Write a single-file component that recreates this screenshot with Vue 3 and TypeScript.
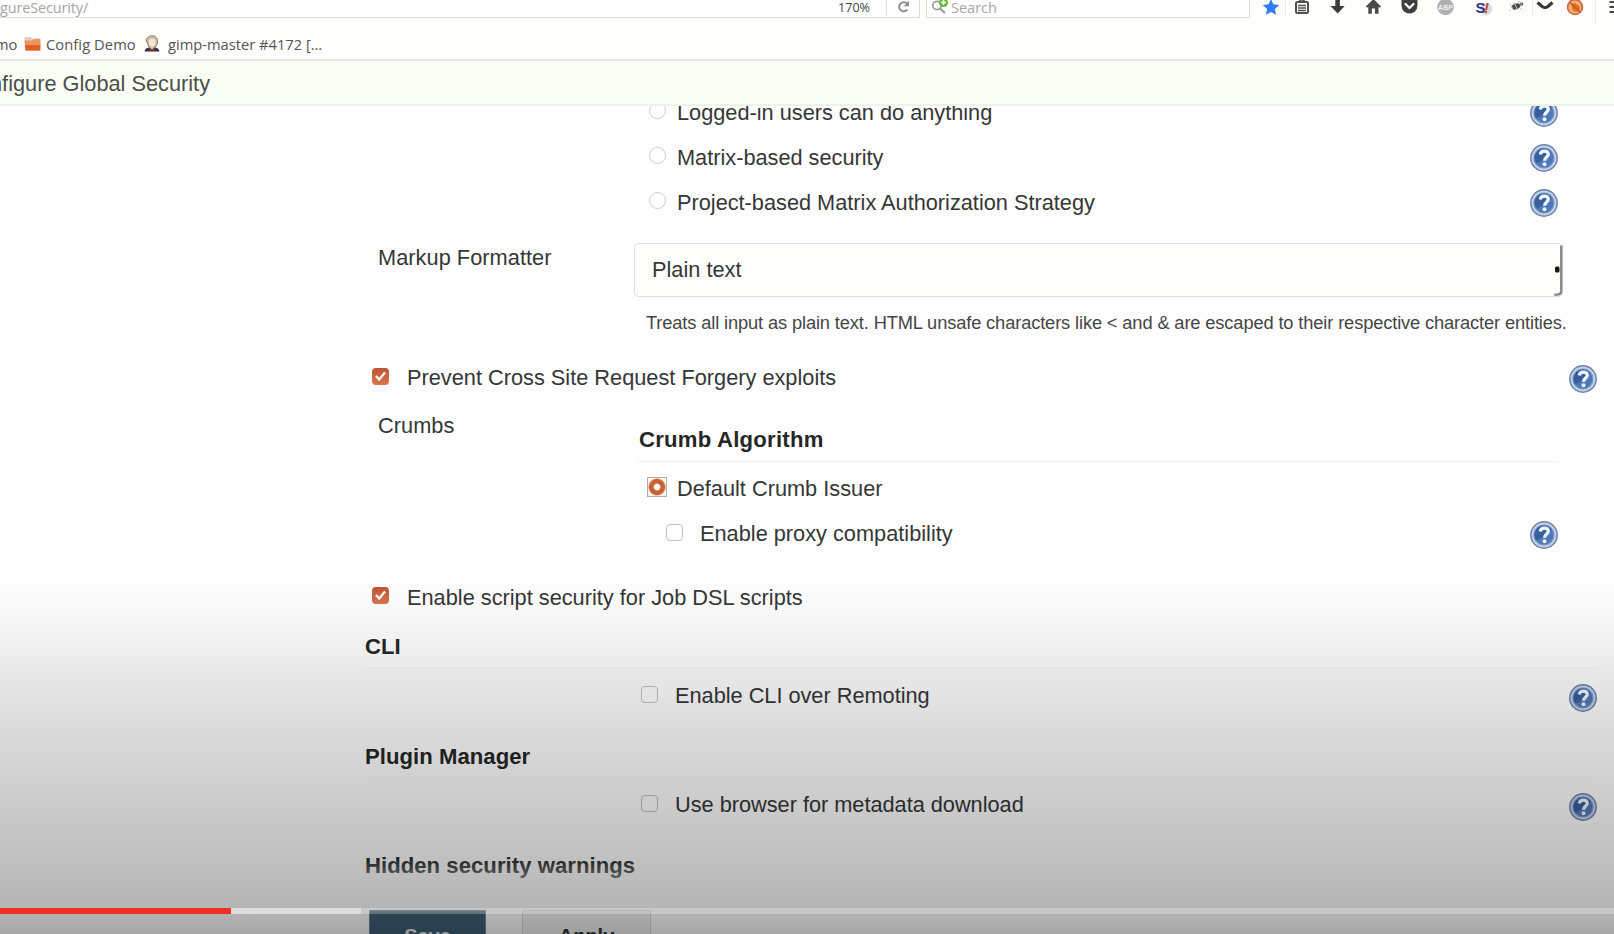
<script setup lang="ts">
import { defineComponent, h } from 'vue'

const strategies: string[] = [
  'Logged-in users can do anything',
  'Matrix-based security',
  'Project-based Matrix Authorization Strategy',
]

interface Section { title: string; option: string; kind: string }
const sections: Section[] = [
  { title: 'CLI', option: 'Enable CLI over Remoting', kind: 'cli' },
  { title: 'Plugin Manager', option: 'Use browser for metadata download', kind: 'plugins' },
]

const HelpIcon = defineComponent({
  render: () =>
    h('svg', { viewBox: '0 0 28 28', width: 28, height: 28 }, [
      h('circle', { cx: 14, cy: 14, r: 13.2, fill: '#c0d3ee', stroke: '#7183a8', 'stroke-width': 1.5 }),
      h('circle', { cx: 14, cy: 14, r: 10, fill: '#5078b6', stroke: '#7b98c8', 'stroke-width': 1.2 }),
      h('path', { d: 'M14 4.5a9.500 9.500 0 0 0-8 14.700Q14 17 21.500 8.300A9.500 9.500 0 0 0 14 4.500z', fill: '#2b508f', opacity: 0.65 }),
      h('path', { d: 'M10.300 10.500C10.600 7.900 12 7.100 14.300 7.100C16.900 7.100 18.300 8.400 18.300 10.300C18.300 13 14.600 13.300 14.600 16.800', fill: 'none', stroke: '#eef5ff', 'stroke-width': 3.3 }),
      h('circle', { cx: 14.500, cy: 20.300, r: 2, fill: '#eef5ff' }),
    ]),
})
</script>

<template>
  <div class="screen">
    <header class="toolbar">
      <div class="url">
        <span class="address">gureSecurity/</span>
        <span class="zoom">170%</span>
        <span class="reload">
          <svg width="14" height="14" viewBox="0 0 14 14"><path d="M10.300 9.700A4.600 4.600 0 1 1 10 3.500" fill="none" stroke="#898d94" stroke-width="2" /><path d="M12 .800v5.400H6.800z" fill="#898d94" /></svg>
        </span>
      </div>
      <div class="search">
        <svg width="18" height="16" viewBox="0 0 18 16"><circle cx="6" cy="5.500" r="4.200" fill="none" stroke="#9a9da1" stroke-width="1.800" /><path d="M9 8.500l5 4.500" stroke="#9a9da1" stroke-width="2.300" /><circle cx="12.500" cy="2.500" r="4.500" fill="#63b82c" /><path d="M12.500 0v5M10 2.500h5" stroke="#fff" stroke-width="1.600" /></svg>
        <span>Search</span>
      </div>
      <svg class="icons" width="364" height="26" viewBox="0 0 364 26">
        <path d="M21-1l2.400 5.300 5.800.700-4.300 4 1.200 5.800-5.100-2.900-5.100 2.900 1.200-5.800-4.300-4 5.800-.700z" fill="#2f7df0" />
        <path d="M35.500 0v16M282.500 0v16M345.500 0v24" stroke="#ececea" />
        <rect x="46" y="2" width="12" height="11" rx="1.500" fill="none" stroke="#505050" stroke-width="2" />
        <path d="M49 1.500Q52-2 55 1.500M48 5.500h8M48 8h8M48 10.500h8" stroke="#505050" stroke-width="1.300" fill="none" />
        <path d="M85.300 0h4.600v6h4.800l-7 7.500-7.200-7.500h4.800z" fill="#3c3c3c" />
        <path d="M123.500-1l7.500 7.500-1.300 1.200-1.200-1v7h-3.500V8.500h-3.200v5.200h-3.500v-7l-1.200 1-1.300-1.200z" fill="#4a4a4a" />
        <path d="M151.500 0h16v5.500a8 8 0 0 1-16 0z" fill="#3f3f3f" />
        <path d="M155.500 4l4 4 4-4" fill="none" stroke="#fff" stroke-width="2.200" stroke-linecap="round" />
        <circle cx="195.500" cy="7" r="8.300" fill="#b0b0b0" />
        <text x="195.500" y="10" text-anchor="middle" class="abp">ABP</text>
        <circle cx="236" cy="9" r="6" fill="#d9d9dc" />
        <text x="225.500" y="12.500" class="stop">S</text><text x="234" y="12.500" class="bang">!</text>
        <ellipse cx="266" cy="6.500" rx="4.500" ry="2.800" fill="#4b4b4b" transform="rotate(-18 266 6.500)" />
        <circle cx="271.500" cy="4" r="1.800" fill="#666" />
        <path d="M260 4l3 5M264 2l3 7M268 1l4 3M261 10l-2 1M270 8l2 2" stroke="#c4c4c4" stroke-width="1" />
        <path d="M287.500 2.500L292.500 6.800Q295 8.500 297.500 6.800L302.500 2.500" fill="none" stroke="#373737" stroke-width="3.200" />
        <circle cx="325" cy="7" r="7.400" fill="#f6b06a" stroke="#d0664a" stroke-width="1.700" />
        <path d="M321 4l4-1 5 4-1 5-6-1z" fill="#e2701a" /><path d="M319.500 2l11 10" stroke="#c65b3c" stroke-width="1.500" />
        <path d="M359.500 2h12M359.500 7h12M359.500 12h12" stroke="#444" stroke-width="2.200" />
      </svg>
    </header>

    <nav class="bookmarks">
      <span class="mo">mo</span>
      <svg class="folder" width="17" height="16" viewBox="0 0 17 16"><path d="M.500 1h6.500l1 1.500h8V13H1z" fill="#d9d1c9" /><path d="M.500 4.500h8l1-1.500h7v11.500H1.500z" fill="#f0935a" /><path d="M1 9h15.300l-.300 5.500H1.500z" fill="#dc6226" /></svg>
      <span class="config">Config Demo</span>
      <svg class="butler" width="16" height="17" viewBox="0 0 16 17"><path d="M2 5Q4 .500 9 .800Q14 1.500 13.500 8l-2 4H5z" fill="#cdbfa4" stroke="#8b8174" /><path d="M5 5Q8 2.500 11.500 5v5L8 12.500 5 10z" fill="#f8e5cf" /><path d="M.500 16.500Q1 13 5 12.500l3 1.500 3-1.500q4 .500 4.500 4z" fill="#30343c" /><path d="M5.500 12.500L8 14l2.500-1.500v3L8 14.500 5.500 15.500z" fill="#c6463d" /></svg>
      <span class="gimp">gimp-master #4172 […</span>
    </nav>

    <div class="crumb"><span>nfigure Global Security</span></div>

    <main class="page">
      <div v-for="name in strategies" :key="name" class="row strategy">
        <i class="radio"></i><span class="label">{{ name }}</span>
        <HelpIcon class="help inner" />
      </div>

      <div class="formatter">
        <span class="name">Markup Formatter</span>
        <div class="select">
          <span>Plain text</span>
          <svg width="10" height="54" viewBox="0 0 10 54"><path d="M8.300 2.500v46q0 3.300-7 3.300" fill="none" stroke="#8b8b8b" stroke-width="2.600" /><rect x="2" y="23.500" width="4.500" height="6" rx="1.500" fill="#161616" /></svg>
        </div>
      </div>
      <p class="note">Treats all input as plain text. HTML unsafe characters like &lt; and &amp; are escaped to their respective character entities.</p>

      <div class="row wide prevent">
        <i class="box on"><svg width="17" height="17" viewBox="0 0 17 17"><path d="M4 8l3.200 3.500L13 4.500" /></svg></i>
        <span class="label">Prevent Cross Site Request Forgery exploits</span>
        <HelpIcon class="help" />
      </div>

      <div class="crumbs">
        <span class="name">Crumbs</span>
        <section class="algo">
          <h3>Crumb Algorithm</h3>
          <div class="row issuer"><i class="radio picked"></i><span class="label">Default Crumb Issuer</span></div>
          <div class="row proxy"><i class="box"></i><span class="label">Enable proxy compatibility</span><HelpIcon class="help inner" /></div>
        </section>
      </div>

      <div class="row wide dsl">
        <i class="box on"><svg width="17" height="17" viewBox="0 0 17 17"><path d="M4 8l3.200 3.500L13 4.500" /></svg></i>
        <span class="label">Enable script security for Job DSL scripts</span>
      </div>

      <section v-for="s in sections" :key="s.kind" class="block" :class="s.kind">
        <h2>{{ s.title }}</h2>
        <div class="row option"><i class="box"></i><span class="label">{{ s.option }}</span><HelpIcon class="help" /></div>
      </section>

      <h2 class="hidden-title">Hidden security warnings</h2>
      <div class="actions"><button class="save">Save</button><button class="apply">Apply</button></div>
      <div class="fade"></div>
    </main>

    <div class="shade"></div>
    <div class="progress"><span class="played"></span><span class="loaded"></span></div>
  </div>
</template>

<style>
body { margin: 0; overflow: hidden; }
</style>

<style scoped>
* { box-sizing: border-box; }
.screen { position: relative; width: 1614px; height: 934px; overflow: hidden; background: #fefefe; font-family: "Liberation Sans", Arial, sans-serif; font-size: 21.75px; color: #353737; white-space: nowrap; display: flex; flex-direction: column; }
.toolbar { height: 26px; flex: none; display: flex; align-items: flex-start; background: #fefefc; font: 14.5px "Open Sans", "Noto Sans", sans-serif; overflow: hidden; }
.url { width: 920px; height: 18px; display: flex; background: #fff; border-right: 1px solid #dcdcda; border-bottom: 1px solid #dcdcda; line-height: 15px; }
.address { width: 838px; color: #a5a5a2; letter-spacing: -.15px; }
.zoom { width: 49px; height: 15px; font-size: 12.600px; color: #444; border-right: 1px solid #ddd; }
.reload { padding: 0 0 0 10px; line-height: 0; }
.search { width: 324px; height: 18px; margin-left: 6px; padding-left: 4px; display: flex; gap: 2px; background: #fff; border: 1px solid #dcdcda; border-top: 0; line-height: 15px; color: #a6a6a6; }
.abp { font: bold 7px "Liberation Sans", sans-serif; fill: #eee; }
.stop { font: bold 15px "Liberation Sans", sans-serif; fill: #25358e; }
.bang { font: bold italic 15px "Liberation Sans", sans-serif; fill: #d93939; }
.bookmarks { height: 35px; flex: none; display: flex; align-items: center; padding-top: 3px; border-bottom: 2px solid #e7e7e4; background: #fefefc; font: 14.700px "Open Sans", "Noto Sans", sans-serif; color: #555; }
.mo { width: 24px; margin-left: -5px; }
.folder { margin-left: 5px; margin-top: -1px; }
.config { margin-left: 5px; width: 98px; letter-spacing: .08px; }
.butler { margin-top: -2px; }
.gimp { margin-left: 8px; }
.crumb { height: 45px; flex: none; display: flex; align-items: center; padding-top: 2px; background: #fbfef4; border-bottom: 2px solid #eff1ec; color: #4c504b; }
.crumb span { margin-left: -10px; }
.page { position: relative; flex: 1; overflow: hidden; }
.row { display: flex; align-items: center; height: 45px; }
.radio, .box { flex: none; display: block; width: 17px; height: 17px; margin-top: -3px; }
.radio { border: 1.500px solid #cdcdcd; border-radius: 50%; background: #fff; }
.box { border: 1.500px solid #c2c2c2; border-radius: 4px; background: rgba(255,255,255,.3); }
.box.on { border: 0; background: linear-gradient(#bd5632, #d97650); }
.box.on svg { display: block; fill: none; stroke: #fff; stroke-width: 2.200; }
.help { margin: 2px 17px 0 auto; flex: none; }
.help.inner { margin-right: 56px; margin-top: 0; }
.proxy .help.inner { margin-top: 2px; }
.strategy { padding-left: 649px; }
.strategy:first-child { margin-top: -16px; }
.strategy .radio { margin-top: -4px; margin-left: -.5px; }
.strategy .label { margin-left: 11.5px; letter-spacing: -.01px; }
.formatter { display: flex; margin-top: 18px; height: 54px; }
.name { width: 256px; margin-left: 378px; line-height: 30px; flex: none; letter-spacing: .04px; }
.select { width: 929px; height: 54px; border: 1.500px solid #dededc; border-right: 0; border-radius: 5px; background: #fefefc; display: flex; align-items: center; justify-content: space-between; padding-left: 17px; }
.note { margin: 0 0 6px 646px; line-height: 52px; height: 52px; font-size: 18.300px; letter-spacing: -.137px; color: #444646; }
.wide { padding-left: 372px; }
.wide .label { margin-left: 18px; }
.crumbs { display: flex; height: 156px; }
.crumbs .name { line-height: 52px; width: 260px; }
.algo { flex: 1; }
h2, h3 { margin: 0; font-weight: bold; font-size: 22.100px; letter-spacing: .05px; color: #252727; }
h3 { height: 62px; padding-top: 18px; line-height: 44px; width: 920px; border-bottom: 1px solid #f0f0f0; margin-bottom: 4px; padding-left: 1px; letter-spacing: .25px; }
.issuer { padding-left: 9px; }
.picked { width: 20px; height: 20px; border: 1px solid #b7aaa4; border-radius: 0; background: radial-gradient(circle, #fff 0 2.500px, #c9602f 4px 7.500px, #fcf6f3 9px); }
.issuer .label { margin-left: 10px; }
.proxy { padding-left: 28px; }
.proxy .label { margin-left: 17px; }
.dsl { margin-top: 18px; }
.dsl .box { margin-top: -2px; }
.dsl .label { padding-top: 2px; }
.block h2 { margin: 7px 16px 0 365px; height: 43px; line-height: 42px; border-bottom: 1px solid rgba(0,0,0,.035); }
.option { height: 46px; margin-top: 4px; padding-left: 641px; }
.option .label { margin-left: 17px; letter-spacing: -.02px; }
.option .help { margin-top: 3px; }
.plugins h2 { margin-top: 16px; line-height: 44px; }
.hidden-title { margin: 17px 0 0 365px; line-height: 42px; }
.actions { display: flex; gap: 36px; margin: 23px 0 0 369px; }
.actions button { height: 52px; font: bold 20px "Liberation Sans", sans-serif; padding: 0; border-radius: 1px; }
.save { width: 117px; border: 1px solid #6b8b9c; background: #3f6075; color: #e8edf0; }
.apply { width: 129px; border: 1px solid #dcdcdc; background: #f2f2f2; color: #333; }
.fade { position: absolute; left: 0; right: 0; top: 752px; height: 30px; background: linear-gradient(rgba(255,255,255,0), rgba(255,255,255,.6)); }
.shade { position: absolute; inset: 575px 0 0; background: linear-gradient(transparent, rgba(0,0,0,.03) 13%, rgba(0,0,0,.09) 28%, rgba(0,0,0,.165) 52%, rgba(0,0,0,.24) 77%, rgba(0,0,0,.29) 94%, rgba(0,0,0,.35)); }
.progress { position: absolute; left: 0; right: 0; top: 908px; height: 6px; display: flex; background: rgba(255,255,255,.25); }
.played { width: 231px; background: #ef3124; }
.loaded { width: 130px; background: #dcdcdc; }
</style>
